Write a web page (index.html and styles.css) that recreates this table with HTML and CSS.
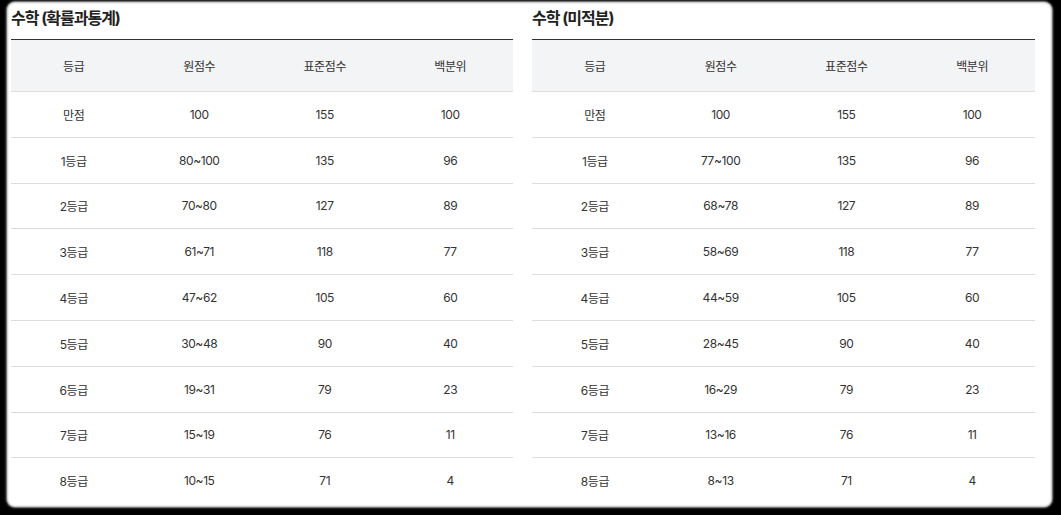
FILE: index.html
```html
<!DOCTYPE html>
<html lang="ko">
<head>
<meta charset="utf-8">
<link rel="stylesheet" href="styles.css">
</head>
<body>
<div class="frame">
  <div class="pair">
    <section class="block">
      <h2 class="title">수학 (확률과통계)</h2>
      <table class="grades">
        <thead><tr><th>등급</th><th>원점수</th><th>표준점수</th><th>백분위</th></tr></thead>
        <tbody>
          <tr><td>만점</td><td>100</td><td>155</td><td>100</td></tr>
          <tr><td>1등급</td><td>80~100</td><td>135</td><td>96</td></tr>
          <tr><td>2등급</td><td>70~80</td><td>127</td><td>89</td></tr>
          <tr><td>3등급</td><td>61~71</td><td>118</td><td>77</td></tr>
          <tr><td>4등급</td><td>47~62</td><td>105</td><td>60</td></tr>
          <tr><td>5등급</td><td>30~48</td><td>90</td><td>40</td></tr>
          <tr><td>6등급</td><td>19~31</td><td>79</td><td>23</td></tr>
          <tr><td>7등급</td><td>15~19</td><td>76</td><td>11</td></tr>
          <tr><td>8등급</td><td>10~15</td><td>71</td><td>4</td></tr>
        </tbody>
      </table>
    </section>
    <section class="block">
      <h2 class="title">수학 (미적분)</h2>
      <table class="grades">
        <thead><tr><th>등급</th><th>원점수</th><th>표준점수</th><th>백분위</th></tr></thead>
        <tbody>
          <tr><td>만점</td><td>100</td><td>155</td><td>100</td></tr>
          <tr><td>1등급</td><td>77~100</td><td>135</td><td>96</td></tr>
          <tr><td>2등급</td><td>68~78</td><td>127</td><td>89</td></tr>
          <tr><td>3등급</td><td>58~69</td><td>118</td><td>77</td></tr>
          <tr><td>4등급</td><td>44~59</td><td>105</td><td>60</td></tr>
          <tr><td>5등급</td><td>28~45</td><td>90</td><td>40</td></tr>
          <tr><td>6등급</td><td>16~29</td><td>79</td><td>23</td></tr>
          <tr><td>7등급</td><td>13~16</td><td>76</td><td>11</td></tr>
          <tr><td>8등급</td><td>8~13</td><td>71</td><td>4</td></tr>
        </tbody>
      </table>
    </section>
  </div>
</div>
</body>
</html>
```

FILE: styles.css
```css
html, body {
  margin: 0;
  padding: 0;
  background: #000;
  height: 515px;
  overflow: hidden;
}

body {
  font-family: Inter, "Noto Sans CJK KR", sans-serif;
  color: #333;
}

.frame {
  margin: 4px 0 0 9px;
  width: 1041px;
  height: 501px;
  background: #fff;
  border-radius: 6px;
  box-shadow: 0 0 0 1px #eee, 0 0 0 2px #ccc, 0 0 2px 3px #999;
  overflow: hidden;
}

.pair {
  display: grid;
  grid-template-columns: 502px 503px;
  column-gap: 19px;
  padding-left: 2px;
}

.title {
  margin: 0;
  padding-top: 3px;
  height: 32px;
  font-size: 16px;
  line-height: 22px;
  font-weight: 700;
  letter-spacing: -1px;
  color: #222;
}

.grades {
  width: 100%;
  border-collapse: collapse;
  table-layout: fixed;
  font-size: 12px;
  letter-spacing: -0.4px;
}

.grades thead tr {
  background: #f3f4f6;
  border-top: 1px solid #333;
}

.grades th {
  height: 51px;
  padding: 0;
  font-weight: 400;
  text-align: center;
  color: #333;
  border-bottom: 1px solid #ddd;
}

.grades td {
  height: 44.8px;
  padding: 0;
  text-align: center;
  border-bottom: 1px solid #ddd;
}

.grades tbody tr:last-child td {
  border-bottom: none;
}
```
